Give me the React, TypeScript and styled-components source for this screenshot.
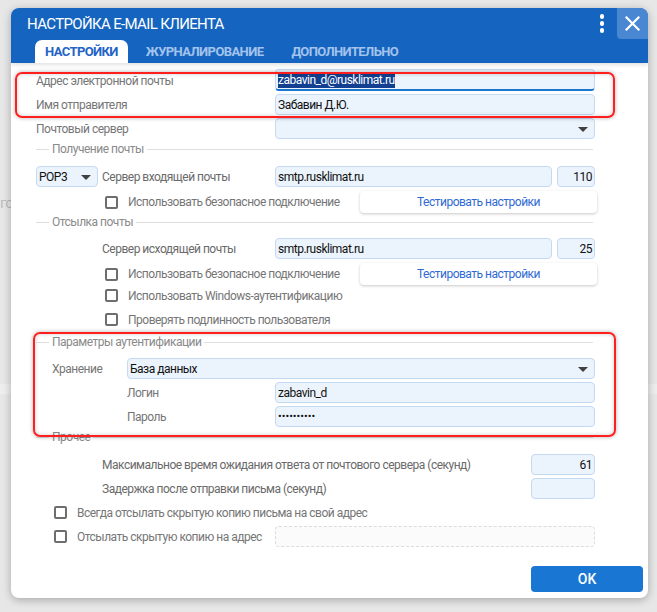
import React from "react";
import styled, { createGlobalStyle } from "styled-components";

const Global = createGlobalStyle`
  html, body { margin: 0; padding: 0; }
  body {
    width: 657px;
    height: 612px;
    overflow: hidden;
    background: #e7e7e7;
    font-family: Roboto, "Noto Sans", "Liberation Sans", sans-serif;
  }
  * { box-sizing: border-box; }
`;

const Page = styled.div`
  position: relative;
  width: 657px;
  height: 612px;
  background: #e7e7e7;
  overflow: hidden;
`;

const BackText = styled.div`
  width: 11px;
  margin-top: 194px;
  white-space: nowrap;
  font-size: 15px;
  letter-spacing: -1px;
  color: #bcbcbc;
`;

const BackBand = styled.div`
  margin-top: 172px;
  height: 10px;
  background: #eeeeee;
`;

const Dialog = styled.div`
  position: absolute;
  left: 11px;
  top: 8px;
  width: 637px;
  height: 590px;
  background: #fff;
  border-radius: 8px;
  box-shadow: 0 2px 8px rgba(0, 0, 0, 0.28);
  overflow: hidden;
  display: flex;
  flex-direction: column;
`;

const Header = styled.div`
  background: #1565c0;
  box-shadow: 0 2px 4px rgba(0, 0, 0, 0.12);
  position: relative;
  z-index: 1;
`;

const TitleRow = styled.div`
  display: flex;
  align-items: center;
  height: 31px;
  padding-left: 16px;
`;

const Title = styled.div`
  color: #fff;
  font-size: 15px;
  font-weight: 400;
  letter-spacing: -0.65px;
`;

const Actions = styled.div`
  margin-left: auto;
  display: flex;
  align-items: center;
  height: 31px;
`;

const Kebab = styled.div`
  display: flex;
  flex-direction: column;
  gap: 2.5px;
  margin-right: 13px;
`;

const Dot = styled.span`
  width: 4.5px;
  height: 4.5px;
  border-radius: 50%;
  background: #fff;
`;

const Close = styled.div`
  width: 31px;
  height: 31px;
  background: #4a87d3;
  border-radius: 0 8px 0 4px;
  display: flex;
  align-items: center;
  justify-content: center;
`;

const Tabs = styled.div`
  display: flex;
  align-items: flex-end;
  height: 24px;
  padding-left: 24px;
  gap: 8px;
`;

const Tab = styled.div<{ $active?: boolean }>`
  height: 23px;
  line-height: 23px;
  padding: 0 10px;
  font-size: 13px;
  font-weight: 700;
  letter-spacing: -0.6px;
  text-transform: uppercase;
  border-radius: 7px 7px 0 0;
  background: ${(p) => (p.$active ? "#fff" : "transparent")};
  color: ${(p) => (p.$active ? "#1f64c6" : "#a3c3ec")};
`;

const Body = styled.div`
  position: relative;
  flex: 1;
  display: flex;
  flex-direction: column;
  letter-spacing: -0.5px;
`;

const Form = styled.div`
  display: flex;
  flex-direction: column;
  width: 561px;
  margin-left: 25px;
`;

const Row = styled.div<{ $mt: number; $h?: number; $indent?: number }>`
  display: flex;
  align-items: center;
  height: ${(p) => p.$h ?? 21}px;
  margin-top: ${(p) => p.$mt}px;
  padding-left: ${(p) => p.$indent ?? 0}px;
`;

const Label = styled.div<{ $w?: number; $dark?: boolean }>`
  ${(p) => (p.$w ? `width: ${p.$w}px; flex: none;` : "flex: 1;")}
  font-size: 12px;
  color: ${(p) => (p.$dark ? "#6a6a6a" : "#767676")};
  white-space: nowrap;
`;

const Field = styled.div<{ $w: number; $right?: boolean; $focus?: boolean; $dashed?: boolean }>`
  position: relative;
  flex: none;
  width: ${(p) => p.$w}px;
  height: 21px;
  display: flex;
  align-items: center;
  justify-content: ${(p) => (p.$right ? "flex-end" : "flex-start")};
  padding: 0 ${(p) => (p.$right ? 2 : 2)}px;
  font-size: 12px;
  color: #111;
  white-space: nowrap;
  background: ${(p) => (p.$dashed ? "#fbfbfb" : "#ebf3fc")};
  border: 1px ${(p) => (p.$dashed ? "dashed #dcdcdc" : "solid #c5daf2")};
  border-radius: 4px;
  ${(p) => (p.$focus ? "border-bottom: 2px solid #1976d2; height: 22px; margin-top: -1px;" : "")}
`;

const Gap = styled.div<{ $w: number }>`
  width: ${(p) => p.$w}px;
  flex: none;
`;

const Caret = styled.span<{ $r: number }>`
  position: absolute;
  right: ${(p) => p.$r}px;
  top: 8px;
  width: 0;
  height: 0;
  border-left: 5px solid transparent;
  border-right: 5px solid transparent;
  border-top: 5px solid #404040;
`;

const Selected = styled.span`
  background: #123f90;
  color: #fff;
  line-height: 16px;
`;

const Dots = styled.span`
  font-size: 11px;
  letter-spacing: 0;
  color: #111;
`;

const Legend = styled.div<{ $mt: number }>`
  display: flex;
  align-items: center;
  height: 14px;
  margin-top: ${(p) => p.$mt}px;
  width: 557px;
  gap: 3px;
  font-size: 12px;
  color: #8a8a8a;
  white-space: nowrap;
`;

const Line = styled.span<{ $w?: number }>`
  height: 1px;
  background: #dedede;
  ${(p) => (p.$w ? `width: ${p.$w}px; flex: none;` : "flex: 1;")}
`;

const Box = styled.span`
  flex: none;
  width: 13px;
  height: 13px;
  border: 2px solid #6e6e6e;
  border-radius: 2px;
  background: #fff;
  margin-right: 10px;
`;

const TestButton = styled.div`
  flex: none;
  width: 237px;
  height: 22px;
  display: flex;
  align-items: center;
  justify-content: center;
  background: #fff;
  border-radius: 4px;
  box-shadow: 0 1px 3px rgba(0, 0, 0, 0.22);
  font-size: 12px;
  color: #2f6ad4;
`;

const Footer = styled.div`
  display: flex;
  justify-content: flex-end;
  padding-right: 5px;
  margin-top: 19px;
`;

const OkButton = styled.div`
  width: 112px;
  height: 26px;
  border-radius: 4px;
  background: #1976d2;
  color: #fff;
  font-size: 14px;
  font-weight: 500;
  letter-spacing: 0;
  display: flex;
  align-items: center;
  justify-content: center;
`;

const Annotation = styled.div`
  position: absolute;
  border: 2px solid #ff1f1f;
  border-radius: 7px;
  box-shadow: 0 0 4px rgba(0, 0, 0, 0.3), inset 0 0 4px rgba(0, 0, 0, 0.2);
  pointer-events: none;
`;

const CloseIcon = () => (
  <svg width="15" height="15" viewBox="0 0 15 15">
    <path d="M1.5 1.5 L13.5 13.5 M13.5 1.5 L1.5 13.5" stroke="#fff" strokeWidth="2.2" strokeLinecap="square" />
  </svg>
);

const Check = ({ text, w }: { text: string; w?: number }) => (
  <>
    <Box />
    <Label $w={w}>{text}</Label>
  </>
);

export default function App() {
  return (
    <Page>
      <Global />
      <BackText>гс</BackText>
      <BackBand />
      <Dialog>
        <Header>
          <TitleRow>
            <Title>НАСТРОЙКА E-MAIL КЛИЕНТА</Title>
            <Actions>
              <Kebab>
                <Dot />
                <Dot />
                <Dot />
              </Kebab>
              <Close>
                <CloseIcon />
              </Close>
            </Actions>
          </TitleRow>
          <Tabs>
            <Tab $active>Настройки</Tab>
            <Tab>Журналирование</Tab>
            <Tab>Дополнительно</Tab>
          </Tabs>
        </Header>
        <Body>
          <Form>
            <Row $mt={7}>
              <Label $w={239}>Адрес электронной почты</Label>
              <Field $w={320} $focus>
                <Selected>zabavin_d@rusklimat.ru</Selected>
              </Field>
            </Row>
            <Row $mt={3}>
              <Label $w={239}>Имя отправителя</Label>
              <Field $w={320}>Забавин Д.Ю.</Field>
            </Row>
            <Row $mt={3}>
              <Label $w={239}>Почтовый сервер</Label>
              <Field $w={320}>
                <Caret $r={6} />
              </Field>
            </Row>
            <Legend $mt={3}>
              <Line $w={13} />
              Получение почты
              <Line />
            </Legend>
            <Row $mt={10}>
              <Field $w={62}>
                POP3
                <Caret $r={6} />
              </Field>
              <Gap $w={4} />
              <Label $w={173} $dark>Сервер входящей почты</Label>
              <Field $w={277}>smtp.rusklimat.ru</Field>
              <Gap $w={5} />
              <Field $w={38} $right>110</Field>
            </Row>
            <Row $mt={4} $h={22} $indent={69}>
              <Check text="Использовать безопасное подключение" w={232} />
              <TestButton>Тестировать настройки</TestButton>
            </Row>
            <Legend $mt={2}>
              <Line $w={13} />
              Отсылка почты
              <Line />
            </Legend>
            <Row $mt={9} $indent={66}>
              <Label $w={173} $dark>Сервер исходящей почты</Label>
              <Field $w={277}>smtp.rusklimat.ru</Field>
              <Gap $w={5} />
              <Field $w={38} $right>25</Field>
            </Row>
            <Row $mt={4} $h={22} $indent={69}>
              <Check text="Использовать безопасное подключение" w={232} />
              <TestButton>Тестировать настройки</TestButton>
            </Row>
            <Row $mt={0} $indent={69}>
              <Check text="Использовать Windows-аутентификацию" />
            </Row>
            <Row $mt={3} $indent={69}>
              <Check text="Проверять подлинность пользователя" />
            </Row>
            <Legend $mt={5}>
              <Line $w={13} />
              Параметры аутентификации
              <Line />
            </Legend>
            <Row $mt={9} $indent={16}>
              <Label $w={75}>Хранение</Label>
              <Field $w={468}>
                База данных
                <Caret $r={6} />
              </Field>
            </Row>
            <Row $mt={3} $indent={91}>
              <Label $w={148}>Логин</Label>
              <Field $w={320}>zabavin_d</Field>
            </Row>
            <Row $mt={3} $indent={91}>
              <Label $w={148}>Пароль</Label>
              <Field $w={320}>
                <Dots>••••••••••</Dots>
              </Field>
            </Row>
            <Legend $mt={3}>
              <Line $w={13} />
              Прочее
              <Line />
            </Legend>
            <Row $mt={10} $indent={66}>
              <Label $w={429} $dark>Максимальное время ожидания ответа от почтового сервера (секунд)</Label>
              <Field $w={64} $right>61</Field>
            </Row>
            <Row $mt={3} $indent={66}>
              <Label $w={429} $dark>Задержка после отправки письма (секунд)</Label>
              <Field $w={64} $right />
            </Row>
            <Row $mt={3} $indent={18}>
              <Check text="Всегда отсылать скрытую копию письма на свой адрес" />
            </Row>
            <Row $mt={3} $indent={18}>
              <Check text="Отсылать скрытую копию на адрес" w={198} />
              <Field $w={320} $dashed />
            </Row>
          </Form>
          <Footer>
            <OkButton>OK</OkButton>
          </Footer>
          <Annotation style={{ left: 4, top: 9, width: 600, height: 46 }} />
          <Annotation style={{ left: 22, top: 269, width: 583, height: 105 }} />
        </Body>
      </Dialog>
    </Page>
  );
}
